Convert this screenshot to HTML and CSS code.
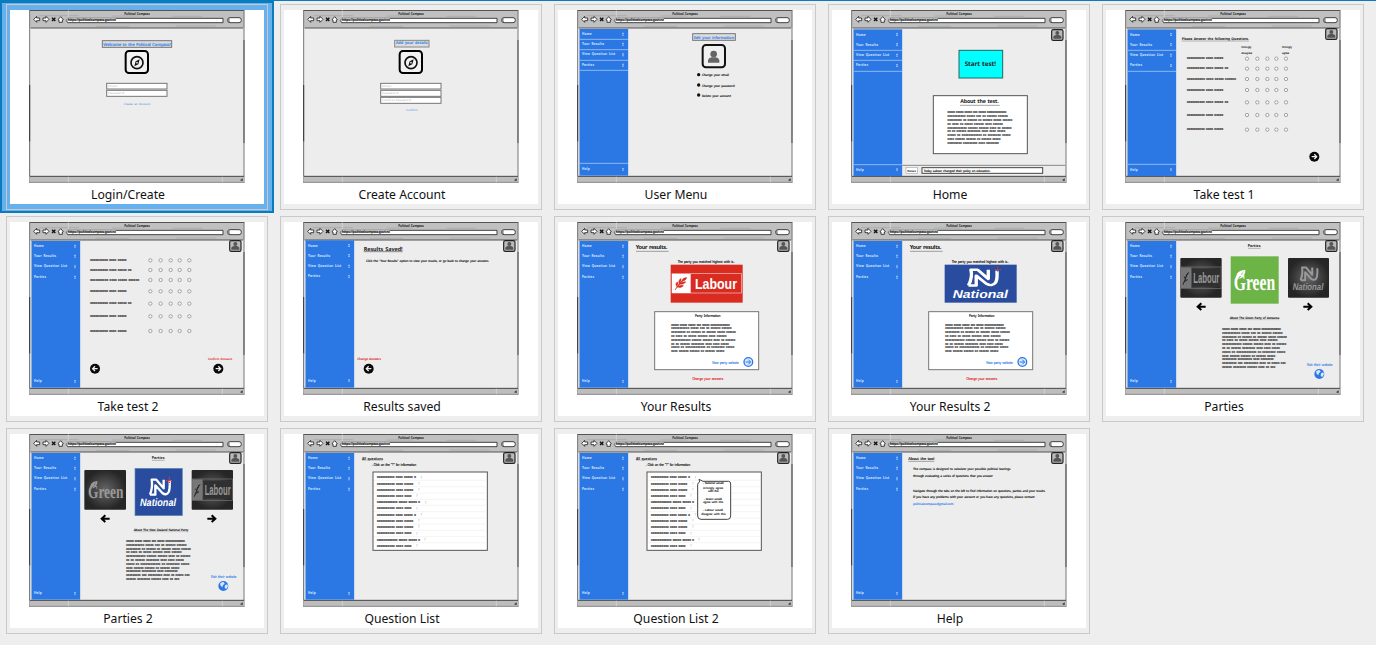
FILE: index.html
```
<!DOCTYPE html>
<html lang="en">
<head>
<meta charset="utf-8">
<title>Political Compass</title>
<link rel="stylesheet" href="styles.css">
</head>
<body>
<svg class="defs" width="0" height="0">
<defs>
<radialGradient id="dim"><stop offset="0" stop-color="#666"/><stop offset="1" stop-color="#262626"/></radialGradient>
<g id="chrome">
  <rect x="2" y="1" width="643" height="516" fill="#ededed"/>
  <rect x="1" y="1" width="645" height="53" fill="#c0c0c0"/>
  <path d="M1 1.5H646M5 54H642" stroke="#555" stroke-width="3"/>
  <path d="M30 17H150M250 18H330M430 19H520M200 49H300M440 48H560" stroke="#a5a5a5" stroke-width="2"/>
  <path d="M2 1V225M645 1V90M645 400V518" stroke="#777" stroke-width="3"/>
  <path d="M2 225V395M645 90V400" stroke="#333" stroke-width="3.5"/>
  <path d="M2 395V518" stroke="#666" stroke-width="3"/>
  <rect x="1" y="499" width="645" height="18" fill="#bdbdbd"/>
  <path d="M3 499H645" stroke="#444" stroke-width="3"/>
  <path d="M1 517H646" stroke="#777" stroke-width="2.5"/>
  <path d="M118 1V22M118 500V517M580 500V517" stroke="#ddd" stroke-width="2"/>
  <path d="M633 511l8-6v8z" fill="#333"/>
  <text class="b" x="286" y="14" font-size="9" textLength="76">Political Compass</text>
  <g fill="#fff" stroke="#222" stroke-width="2.5" stroke-linejoin="round">
    <path d="M14 28l9-9v5h9v8h-9v5z"/><path d="M60 28l-9-9v5h-9v8h9v5z"/>
    <path d="M87 29l8-9 8 9-3 1v7H90v-7z"/>
    <path d="M116 25H582V38H116Q108 31 116 25Z"/>
    <rect x="596" y="23" width="41" height="15" rx="7"/>
  </g>
  <path d="M69 23l10 10M79 23l-10 10" stroke="#111" stroke-width="4"/>
  <path d="M601 25Q597 30 601 36" fill="none" stroke="#777" stroke-width="4"/>
  <rect x="113" y="24" width="147" height="8" fill="#b8b8b8"/>
  <text class="b" x="116" y="34" font-size="10" textLength="145">https://politicalcompass.govt.nz</text>
</g>
<g id="side">
  <rect x="7.5" y="57" width="146" height="440" fill="#2b78e4"/>
  <g class="menu" font-size="9.5">
    <text x="15" y="76" textLength="29">Home</text><text x="15" y="106" textLength="66">Your Results</text>
    <text x="15" y="136" textLength="99">View Question List</text><text x="15" y="168" textLength="36">Parties</text>
    <text x="15" y="481" textLength="23">Help</text>
  </g>
  <path d="M138 68v9M138 98v9M138 130v9M138 161v9M138 474v8" stroke="#b9d4fb" stroke-width="4" stroke-dasharray="4 1.5"/>
</g>
<g id="badge">
  <rect x="602" y="56" width="34" height="32" rx="5" fill="#bbb" stroke="#222" stroke-width="3.5"/>
  <circle cx="619" cy="66" r="6" fill="#555"/><path d="M607 83v-6q3-5 8-5h8q5 0 8 5v6z" fill="#555"/>
</g>
<g id="compass">
  <rect x="290" y="123" width="67" height="66" rx="10" fill="#f2f2f2" stroke="#000" stroke-width="6"/>
  <circle cx="324" cy="158" r="18" fill="none" stroke="#111" stroke-width="5"/>
  <path d="M332 148l-4 15-12 6 4-15z" fill="#111"/><circle cx="324" cy="158" r="2.5" fill="#eee"/>
</g>
<g id="p8" class="b" font-size="10">
  <text y="0" textLength="177">xxxxx xxxxx xxxxx xxx xxxxx xxxxxxxxxxxxx</text>
  <text y="11.4" textLength="182">xxxxxxxxxxx xxxxx xxx xx xxxxxx xxxxxx</text>
  <text y="22.8" textLength="195">xxxxxxxxx xx xxxxxx xx xxxxxx xxxxx xxxxxx</text>
  <text y="34.2" textLength="167">xx xxxx xx xxxxx xxxxxx xxxx xxxxxx</text>
  <text y="45.6" textLength="193">xxxxxxxxxxxx xxxxxx xxxxxx xxxx xx xxxxxx</text>
  <text y="57" textLength="174">xx xx xxxxxx xxxxxxxx xxxx xxxx xxxxx</text>
  <text y="68.4" textLength="190">xxxxx xx xxxxxxxxxxxx xx xxxxxxxx xxxxx</text>
  <text y="79.8" textLength="160">xxxx xxxxxx xxxxxx xx xxxxxx xxxxx</text>
</g>
<g id="p9"><use href="#p8"/><text class="b" y="91.2" font-size="10" textLength="155">xxxxxxxxx xxxxxxxxx xxxx xxxxxxxx</text></g>
<g id="p11"><use href="#p9"/>
  <text class="b" y="102.6" font-size="10" textLength="191">xxxxxxxxx xxx xxxxxxxxx xxxx xx xxxxx xxx</text>
  <text class="b" y="114" font-size="10" textLength="160">xxxxxx xxxxxxxx xxxxxx xxxx xx xxx</text></g>
<g id="dots" fill="#f8f8f8" stroke="#888" stroke-width="2.2">
  <circle cx="366" r="5"/><circle cx="397" r="5"/><circle cx="427" r="5"/><circle cx="454" r="5"/><circle cx="483" r="5"/>
</g>
<g id="q1"><text class="b" x="185" y="2" font-size="11" textLength="110">xxxxxxxxxx xxxx xxxxx</text><use href="#dots"/></g>
<g id="q2"><text class="b" x="185" y="2" font-size="11" textLength="125">xxxxxxxxxx xxxx xxxxx xx</text><use href="#dots"/></g>
<g id="q3"><text class="b" x="185" y="2" font-size="11" textLength="148">xxxxxxxxxx xxxx xxxxx xxxxxx</text><use href="#dots"/></g>
<g id="go"><circle r="15" fill="#0a0a0a"/><path d="M-8 0H7M0-7l7 7-7 7" fill="none" stroke="#eee" stroke-width="4"/></g>
<g id="arrow"><path d="M-13 0H10M0-10l11 10-11 10" fill="none" stroke="#000" stroke-width="6"/></g>
<g id="nmark" fill="none" stroke="currentColor" stroke-width="7" stroke-linejoin="round">
  <path d="M1 50Q10 26 6 5H20L42 31V5"/><path d="M1 50H17V22L38 45Q50 54 57 42Q61 34 60 8"/>
</g>
<g id="labour">
  <rect x="4" y="27" width="209" height="58" fill="none" stroke="#fff" stroke-opacity=".75" stroke-width="2"/>
  <rect x="4" y="28" width="56" height="57" fill="#fff"/>
  <path d="M13 76Q25 53 45 40M18 65q-5-10 3-13 3 7-3 13M26 57q-4-11 5-15 2 8-5 15M34 49q1-10 14-10-2 9-14 10M21 67q11 4 17-4-9-4-17 4M29 58q11 2 16-6-9-2-16 6" fill="#d92b20" stroke="#d92b20" stroke-width="2"/>
  <text class="brand" x="73" y="73" font-size="43" textLength="126" lengthAdjust="spacingAndGlyphs">Labour</text>
</g>
<g id="lab-dim">
  <rect width="124" height="119" rx="3" fill="url(#dim)"/>
  <rect x="2" y="27" width="120" height="64" fill="none" stroke="#777" stroke-width="2"/>
  <rect x="2" y="28" width="31" height="62" fill="#777"/><rect x="35" y="32" width="85" height="54" fill="#303030"/>
  <path d="M8 80L22 45M11 56l6 9M25 43l-9 13M12 71l10-6" stroke="#222" stroke-width="3"/>
  <text x="39" y="74" font-size="43" class="brand dimtext" textLength="78" lengthAdjust="spacingAndGlyphs">Labour</text>
</g>
<g id="leaf"><path d="M-2 14Q-10-10 23-14Q24 2 12 7L20 3Q10 16-2 14ZM-4 20Q10 10 18-10" fill="currentColor"/></g>
<g id="globe"><circle r="15" fill="#2b78e4"/><path d="M-10-7Q-4-14 2-11L4-6-1-3-3 4-8-1ZM5-2l7-3 2 6-5 8-5-3z" fill="#d8e7ff"/></g>
<g id="about-head"><text class="b" x="368" y="76" font-size="11" textLength="39">Parties</text><path d="M369 79H407" stroke="#777" stroke-width="1.5"/></g>
<g id="visit"><text class="l" x="545" y="431" font-size="9" textLength="78">Visit their website</text><use href="#globe" x="583" y="456"/></g>
<g id="results">
  <text class="h" x="176" y="82" font-size="17" textLength="95">Your results.</text><path d="M177 88H275" stroke="#777" stroke-width="2"/>
  <text class="b" x="302" y="122" font-size="9.5" textLength="171">The party you matched highest with is..</text>
  <rect x="233" y="269" width="312" height="174" fill="#fff" stroke="#777" stroke-width="3"/>
  <text class="b" x="354" y="284" font-size="9.5" textLength="77">Party Information</text>
  <use href="#p8" x="282" y="311"/>
  <text class="l" x="405" y="425" font-size="9.5" textLength="81">View party website</text>
  <circle cx="514" cy="420" r="13" fill="#dce9ff" stroke="#2b78e4" stroke-width="4"/><path d="M506 420h14M514 413l7 7-7 7" stroke="#2b78e4" stroke-width="3" fill="none"/>
  <text class="r" x="346" y="475" font-size="9.5" textLength="93">Change your answers</text>
</g>
<g id="questions">
  <text class="b" x="177" y="77" font-size="10" textLength="63">All questions</text><path d="M177 79H240" stroke="#777"/>
  <text class="b" x="206" y="96" font-size="9.5" textLength="134">- Click on the "?" for information</text>
  <rect x="210" y="114" width="343" height="235" fill="#fff" stroke="#555" stroke-width="3"/>
  <path d="M213 139H551M213 158H551M213 177H551M213 196H551M213 214H551M213 233H551M213 252H551M213 270H551M213 289H551M213 308H551M213 326H551" stroke="#eee" stroke-width="2"/>
  <g class="b" font-size="11">
    <text x="221" y="133" textLength="118">xxxxxxxxxx xxxx xxxxx x</text><text x="221" y="152" textLength="110">xxxxxxxxxx xxxx xxxxx</text>
    <text x="221" y="171" textLength="110">xxxxxxxxxx xxxx xxxxx</text><text x="221" y="189" textLength="105">xxxxxxxxxx xxxx xxxx</text>
    <text x="221" y="208" textLength="130">xxxxxxxxxxxx xxxxx xxxxx x</text><text x="221" y="226" textLength="105">xxxxxxxxxx xxxx xxxx</text>
    <text x="221" y="245" textLength="118">xxxxxxxxxx xxxx xxxxx x</text><text x="221" y="264" textLength="110">xxxxxxxxxx xxxx xxxxx</text>
    <text x="221" y="282" textLength="110">xxxxxxxxxx xxxx xxxxx</text><text x="221" y="301" textLength="105">xxxxxxxxxx xxxx xxxx</text>
    <text x="221" y="320" textLength="130">xxxxxxxxxxxx xxxxx xxxxx x</text><text x="221" y="339" textLength="105">xxxxxxxxxx xxxx xxxx</text>
  </g>
  <g font-size="8" fill="#888"><text x="353" y="134">?</text><text x="346" y="153">?</text><text x="346" y="172">?</text><text x="340" y="190">?</text><text x="366" y="209">?</text><text x="340" y="227">?</text><text x="353" y="246">?</text><text x="346" y="265">?</text><text x="346" y="283">?</text><text x="340" y="302">?</text><text x="364" y="321">?</text><text x="340" y="340">?</text></g>
</g>
</defs>
</svg>

<main class="grid">
<div class="cell selected"><figure class="card"><div class="page"><svg class="thumb" viewBox="0 0 648 519"><use href="#chrome"/>
  <rect x="220" y="92" width="208" height="20" fill="#ddd" stroke="#777" stroke-width="3"/>
  <text class="l" x="223" y="107" font-size="13" textLength="202">Welcome to the Political Compass!</text>
  <use href="#compass"/>
  <g fill="#fff" stroke="#777" stroke-width="3"><rect x="233" y="220" width="181" height="17"/><rect x="233" y="241" width="181" height="18"/></g>
  <g class="ph" font-size="9"><text x="237" y="231" textLength="28">Email</text><text x="237" y="251" textLength="48">Password</text></g>
  <text class="l thin" x="284" y="284" font-size="9" textLength="80">Create an Account</text>
</svg><figcaption>Login/Create</figcaption></div></figure></div>

<div class="cell"><figure class="card"><div class="page"><svg class="thumb" viewBox="0 0 648 519"><use href="#chrome"/>
  <rect x="275" y="91" width="103" height="20" fill="#ddd" stroke="#888" stroke-width="3"/>
  <text class="l" x="278" y="103" font-size="12" textLength="96">Add your details</text>
  <use href="#compass"/>
  <g fill="#fff" stroke="#777" stroke-width="3"><rect x="233" y="220" width="181" height="17"/><rect x="233" y="241" width="181" height="18"/><rect x="233" y="262" width="181" height="18"/></g>
  <g class="ph" font-size="9"><text x="237" y="231" textLength="28">Email</text><text x="237" y="251" textLength="48">Password</text><text x="237" y="273" textLength="87">Confirm Password</text></g>
  <text class="l thin" x="310" y="303" font-size="9" textLength="34">Confirm</text>
</svg><figcaption>Create Account</figcaption></div></figure></div>

<div class="cell"><figure class="card"><div class="page"><svg class="thumb" viewBox="0 0 648 519"><use href="#chrome"/><use href="#side"/>
  <path d="M8 88H153M8 119H153M8 151H153M8 181H153M8 460H153" stroke="#bcd5fa" stroke-width="2"/>
  <rect x="347" y="71" width="128" height="20" fill="#ddd" stroke="#777" stroke-width="3"/>
  <text class="l" x="350" y="86" font-size="12" textLength="121">Edit your information</text>
  <rect x="377" y="105" width="67" height="67" rx="10" fill="#f0f0f0" stroke="#111" stroke-width="6"/>
  <circle cx="410" cy="132" r="10" fill="#666"/><path d="M393 158v-8q3-8 11-8h12q8 0 11 8v8z" fill="#666"/>
  <g fill="#111"><circle cx="365" cy="194" r="5"/><circle cx="365" cy="225" r="5"/><circle cx="365" cy="255" r="5"/></g>
  <g class="b" font-size="9.5"><text x="375" y="198" textLength="81">Change your email</text><text x="375" y="231" textLength="98">Change your password</text><text x="375" y="261" textLength="87">Delete your account</text></g>
</svg><figcaption>User Menu</figcaption></div></figure></div>

<div class="cell"><figure class="card"><div class="page"><svg class="thumb" viewBox="0 0 648 519"><use href="#chrome"/><use href="#side" y="1"/><use href="#badge" y="3"/>
  <path d="M8 121H153M8 151H153M8 184H153M8 464H153" stroke="#bcd5fa" stroke-width="2"/>
  <rect x="324" y="121" width="131" height="83" fill="#0ff" stroke="#266" stroke-width="3"/>
  <text class="h" x="341" y="168" font-size="19" textLength="94">Start test!</text>
  <rect x="247" y="257" width="282" height="174" fill="#fff" stroke="#555" stroke-width="3"/>
  <text class="h" x="328" y="280" font-size="16" textLength="115">About the test.</text><path d="M327 286H446" stroke="#777" stroke-width="2"/>
  <use href="#p9" x="289" y="310"/>
  <path d="M154 466H643" stroke="#888" stroke-width="3"/>
  <rect x="165" y="472" width="34" height="18" fill="#fff" stroke="#aaa" stroke-width="2"/><text class="b" x="169" y="485" font-size="9" textLength="26">News</text>
  <rect x="213" y="473" width="362" height="17" fill="#fff" stroke="#444" stroke-width="3"/>
  <text class="b" x="218" y="485" font-size="9.5" textLength="200">Today Labour changed their policy on education.</text>
</svg><figcaption>Home</figcaption></div></figure></div>

<div class="cell"><figure class="card"><div class="page"><svg class="thumb" viewBox="0 0 648 519"><use href="#chrome"/><use href="#side" y="1"/><use href="#badge"/>
  <path d="M8 121H153M8 184H153M8 463H153" stroke="#bcd5fa" stroke-width="2"/>
  <text class="b" x="170" y="89" font-size="10.5" textLength="202">Please Answer the following Questions.</text><path d="M170 93H372" stroke="#777" stroke-width="1.5"/>
  <g class="b" font-size="8"><text x="349" y="114" textLength="30">Strongly</text><text x="349" y="133" textLength="32">disagree</text><text x="471" y="114" textLength="30">Strongly</text><text x="471" y="133" textLength="21">agree</text></g>
  <use href="#q1" y="146"/><use href="#q2" y="176"/><use href="#q3" y="207"/><use href="#q1" y="240"/><use href="#q2" y="277"/><use href="#q1" y="315"/><use href="#q1" y="359"/>
  <use href="#go" x="568" y="440"/>
</svg><figcaption>Take test 1</figcaption></div></figure></div>

<div class="cell"><figure class="card"><div class="page"><svg class="thumb" viewBox="0 0 648 519"><use href="#chrome"/><use href="#side"/><use href="#badge"/>
  <use href="#q1" x="-2" y="115"/><use href="#q2" x="-2" y="144"/><use href="#q3" x="-2" y="174"/><use href="#q1" x="-2" y="208"/><use href="#q2" x="-2" y="245"/><use href="#q1" x="-2" y="283"/><use href="#q1" x="-2" y="327"/>
  <use href="#go" transform="translate(198 440) scale(-1 1)"/><use href="#go" x="568" y="440"/>
  <text class="r" x="537" y="415" font-size="9" textLength="73">Confirm Answers</text>
</svg><figcaption>Take test 2</figcaption></div></figure></div>

<div class="cell"><figure class="card"><div class="page"><svg class="thumb" viewBox="0 0 648 519"><use href="#chrome"/><use href="#side" y="-2"/><rect x="8" y="490" width="145" height="7" fill="#2b78e4"/><use href="#badge"/>
  <text class="h" x="182" y="86" font-size="16.5" textLength="117">Results Saved!</text><path d="M182 89H299" stroke="#555" stroke-width="2"/>
  <text class="b" x="189" y="119" font-size="9.5" textLength="368">Click the "Your Results" option to view your results, or go back to change your answers</text>
  <text class="r" x="163" y="415" font-size="9.5" textLength="71">Change Answers</text>
  <use href="#go" transform="translate(197 440) scale(-1 1)"/>
</svg><figcaption>Results saved</figcaption></div></figure></div>

<div class="cell"><figure class="card"><div class="page"><svg class="thumb" viewBox="0 0 648 519"><use href="#chrome"/><use href="#side"/><use href="#badge"/><use href="#results"/>
  <rect x="281" y="128" width="216" height="114" fill="#d92b20"/><use href="#labour" x="281" y="128"/>
</svg><figcaption>Your Results</figcaption></div></figure></div>

<div class="cell"><figure class="card"><div class="page"><svg class="thumb" viewBox="0 0 648 519"><use href="#chrome"/><use href="#side"/><use href="#badge"/><use href="#results"/>
  <rect x="281" y="128" width="216" height="114" fill="#2a4c9f"/>
  <g color="#fff" transform="translate(351 138) scale(1.45 1.05)"><use href="#nmark"/></g>
  <path d="M440 134v16M432 143h18" stroke="#e33" stroke-width="3" stroke-dasharray="4 3"/>
  <text class="nat" x="305" y="227" font-size="34" textLength="166" lengthAdjust="spacingAndGlyphs">National</text>
</svg><figcaption>Your Results 2</figcaption></div></figure></div>

<div class="cell"><figure class="card"><div class="page"><svg class="thumb" viewBox="0 0 648 519"><use href="#chrome"/><use href="#side"/><use href="#badge"/><use href="#about-head"/>
  <use href="#lab-dim" x="166" y="108"/>
  <rect x="317" y="103" width="144" height="142" fill="#6cb446"/>
  <text class="green" x="326" y="204" font-size="70" textLength="125" lengthAdjust="spacingAndGlyphs">Green</text>
  <g color="#fff"><use href="#leaf" x="338" y="157"/></g>
  <rect x="489" y="108" width="123" height="119" rx="3" fill="url(#dim)"/>
  <g color="#999" transform="translate(526 132) scale(.85)"><use href="#nmark"/></g>
  <text class="nat dimtext" x="503" y="205" font-size="29" textLength="92" lengthAdjust="spacingAndGlyphs">National</text>
  <use href="#arrow" transform="translate(229 254) scale(-1 1)"/><use href="#arrow" x="548" y="254"/>
  <text class="b" x="314" y="291" font-size="9.5" textLength="149">About The Green Party of Aotearoa</text><path d="M314 293H463" stroke="#888"/>
  <use href="#p11" x="291" y="324"/><use href="#visit"/>
</svg><figcaption>Parties</figcaption></div></figure></div>

<div class="cell"><figure class="card"><div class="page"><svg class="thumb" viewBox="0 0 648 519"><use href="#chrome"/><use href="#side"/><use href="#badge"/><use href="#about-head"/>
  <rect x="166" y="108" width="125" height="119" rx="3" fill="url(#dim)"/>
  <text class="green dimtext" x="177" y="191" font-size="58" textLength="106" lengthAdjust="spacingAndGlyphs">Green</text>
  <g color="#999" transform="translate(187 152) scale(.8)"><use href="#leaf"/></g>
  <rect x="318" y="103" width="142" height="142" fill="#2a4c9f" stroke="#5b8eb5" stroke-width="2"/>
  <g color="#fff" transform="translate(362 132) scale(1)"><use href="#nmark"/></g>
  <path d="M421 129v22M411 140h20" stroke="#e33" stroke-width="4" stroke-dasharray="4 3"/>
  <text class="nat" x="333" y="216" font-size="32" textLength="108" lengthAdjust="spacingAndGlyphs">National</text>
  <use href="#lab-dim" x="488" y="108"/>
  <use href="#arrow" transform="translate(229 254) scale(-1 1)"/><use href="#arrow" x="548" y="254"/>
  <text class="b" x="314" y="291" font-size="9.5" textLength="164">About The New Zealand National Party</text><path d="M314 293H478" stroke="#888"/>
  <use href="#p11" x="291" y="324"/><use href="#visit"/>
</svg><figcaption>Parties 2</figcaption></div></figure></div>

<div class="cell"><figure class="card"><div class="page"><svg class="thumb" viewBox="0 0 648 519"><use href="#chrome"/><use href="#side"/><use href="#badge"/><use href="#questions"/></svg><figcaption>Question List</figcaption></div></figure></div>

<div class="cell"><figure class="card"><div class="page"><svg class="thumb" viewBox="0 0 648 519"><use href="#chrome"/><use href="#side"/><use href="#badge"/><use href="#questions"/>
  <path d="M366 136L378 142H455Q461 142 461 150V246Q461 256 452 256H372Q362 256 362 246V152Q362 146 368 144Z" fill="#fff" stroke="#444" stroke-width="3"/>
  <g class="b" font-size="9"><text x="378" y="151" textLength="62">- National would</text><text x="378" y="164" textLength="61">strongly agree</text><text x="393" y="175" textLength="32">with this</text><text x="381" y="197" textLength="54">- Green would</text><text x="378" y="208" textLength="61">agree with this</text><text x="378" y="231" textLength="60">- Labour would</text><text x="373" y="243" textLength="73">disagree with this</text></g>
</svg><figcaption>Question List 2</figcaption></div></figure></div>

<div class="cell"><figure class="card"><div class="page"><svg class="thumb" viewBox="0 0 648 519"><use href="#chrome"/><use href="#side"/><use href="#badge"/>
  <text class="b" x="172" y="79" font-size="11.5" textLength="78">About the tool</text><path d="M172 82H250" stroke="#555" stroke-width="1.5"/>
  <g class="b" font-size="9.5"><text x="186" y="109" textLength="293">The compass is designed to calculate your possible political leanings</text><text x="186" y="130" textLength="240">through evaluating a series of questions that you answer</text>
  <text x="186" y="173" textLength="396">Navigate through the tabs on the left to find information on questions, parties and your results</text><text x="186" y="192" textLength="366">If you have any problems with your account or you have any questions, please contact:</text></g>
  <text class="l" x="186" y="212" font-size="9.5" textLength="122">politicalcompass@gmail.com</text>
</svg><figcaption>Help</figcaption></div></figure></div>
</main>
</body>
</html>
```
FILE: styles.css
```
* { box-sizing: border-box; }
body {
  margin: 0;
  height: 645px;
  overflow: hidden;
  background: linear-gradient(#0a7bbd 1px, #eeeeee 1px);
  font-family: "Noto Sans", "Open Sans", sans-serif;
}
.defs { display: block; height: 0; }
.grid {
  display: grid;
  grid-template-columns: repeat(5, 274px);
  grid-auto-rows: 212px;
}
.cell { padding: 4px 6px; }
.selected {
  height: 213px;
  padding: 1px 4px;
  background: #66b0ee;
  border: solid #0a7bbd;
  border-width: 3px 2px 2px;
}
.card {
  width: 262px;
  height: 206px;
  margin: 0;
  padding: 5px 3px;
  border: 1px solid #c8c9cb;
}
.page {
  height: 194px;
  background: #fff;
}
.thumb {
  display: block;
  width: 216px;
  height: 173px;
  margin-left: 19px;
}
figcaption {
  padding: 1px 18px 0 0;
  color: #111;
  font-size: 12.2px;
  line-height: 22px;
  text-align: center;
}
.thumb text { text-rendering: geometricPrecision; }
.b { font-weight: 700; fill: #222; word-spacing: 2px; }
.h { font-weight: 700; fill: #222; word-spacing: 2px; }
.l { font-weight: 700; fill: #3d86ea; word-spacing: 2px; }
.thin { font-weight: 400; }
.r { font-weight: 700; fill: #d33; word-spacing: 2px; }
.ph { fill: #aaa; }
.menu { font-weight: 700; fill: #d3e4fd; word-spacing: 2px; }
.brand { font-family: "Liberation Sans", sans-serif; font-weight: 700; fill: #fff; }
.nat { font-family: "Liberation Sans", sans-serif; font-weight: 700; font-style: italic; fill: #fff; }
.green { font-family: "Liberation Serif", serif; font-weight: 700; fill: #fff; }
.dimtext { fill: #999; }
```
